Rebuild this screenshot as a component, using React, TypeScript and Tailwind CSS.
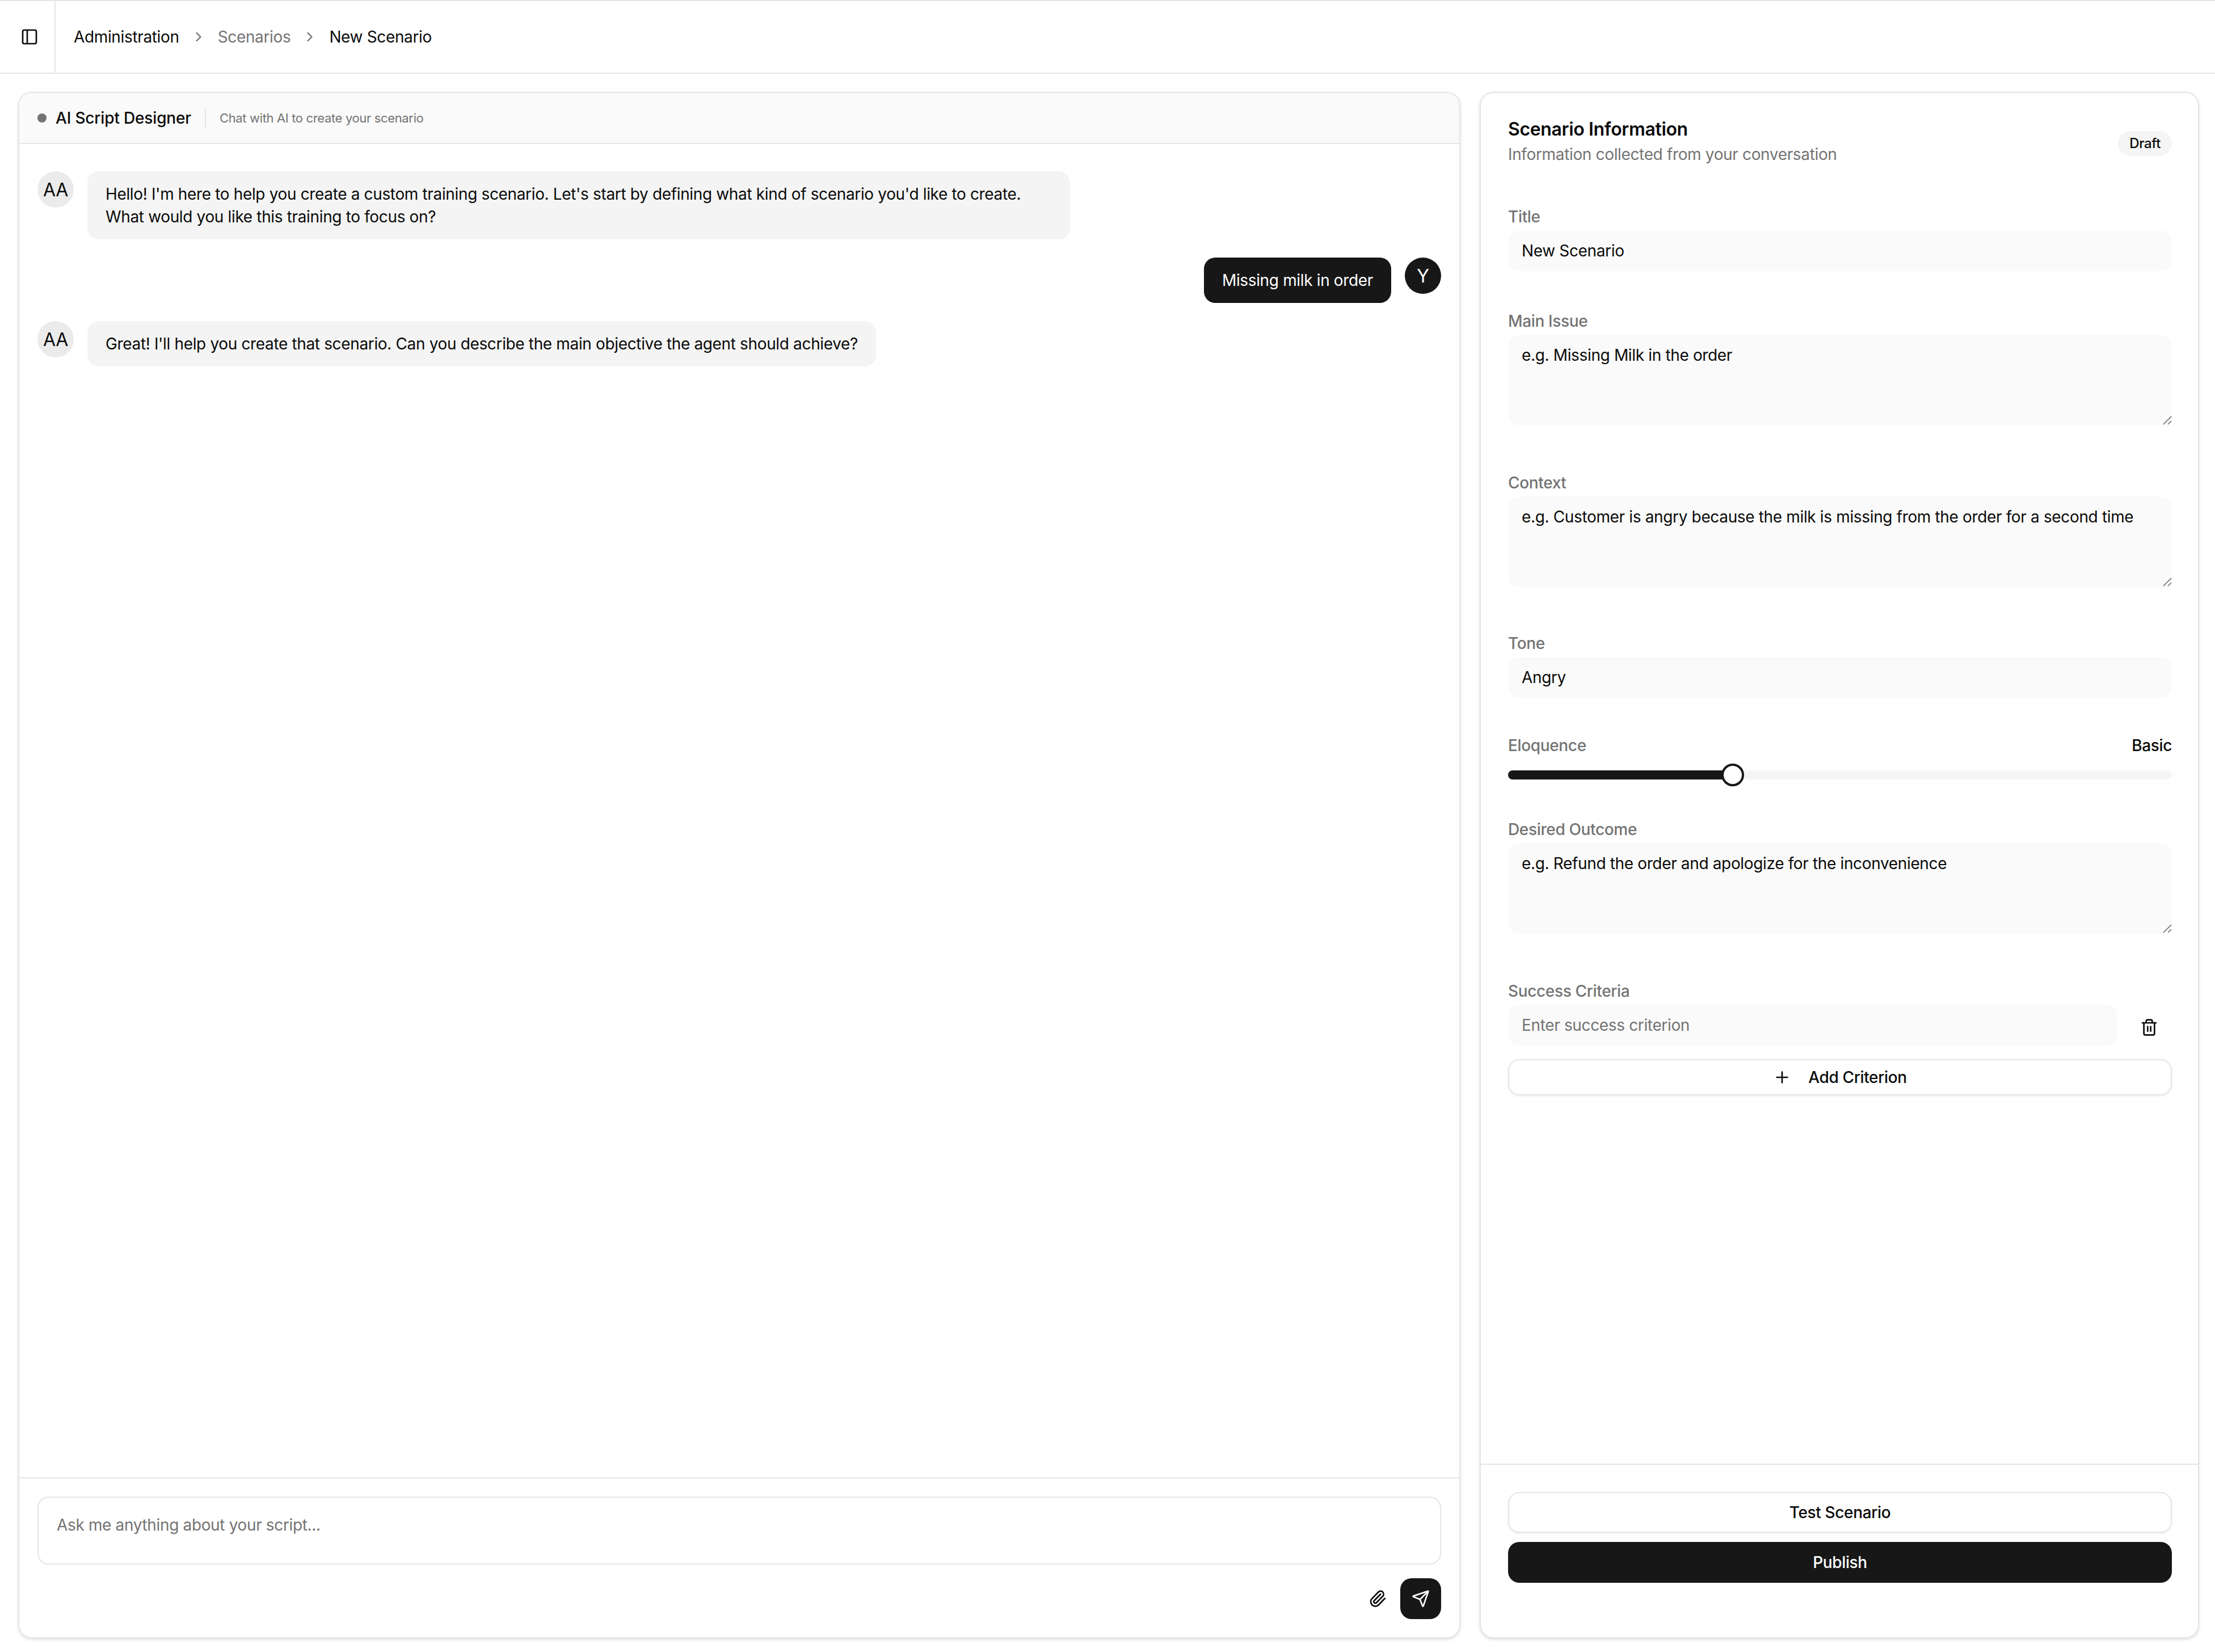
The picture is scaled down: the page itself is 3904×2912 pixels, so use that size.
import { ChevronRight, PanelLeft, Paperclip, Plus, Send, Trash2 } from 'lucide-react'

function Avatar({ label, dark }: { label: string; dark?: boolean }) {
  return (
    <div className={`flex size-8 shrink-0 items-center justify-center rounded-full pt-px text-base ${dark ? 'bg-[#171717] text-white' : 'bg-[#ebebeb] text-[#0a0a0a]'}`}>
      {label}
    </div>
  )
}

function Field({ label, className, children }: { label: string; className?: string; children: React.ReactNode }) {
  return (
    <div className={className}>
      <label className="mb-0.5 block text-sm font-medium text-[#737373]">{label}</label>
      {children}
    </div>
  )
}

function Area({ value }: { value: string }) {
  return (
    <div className="relative">
      <textarea defaultValue={value} className="min-h-20 w-full resize-none rounded-[10px] bg-[#fafafa] px-3 py-2 text-sm text-[#0a0a0a] outline-none" />
      <svg viewBox="0 0 8 8" className="absolute right-0 bottom-[7px] size-2 text-[#6b6b6b]" fill="none" stroke="currentColor" strokeWidth="0.8">
        <path d="M0.5 7.5 L7.5 0.5 M4.5 7.5 L7.5 4.5" />
      </svg>
    </div>
  )
}

const inputClass = 'h-9 w-full rounded-[10px] bg-[#fafafa] px-3 text-sm text-[#0a0a0a] outline-none placeholder:text-[#737373]'

export default function App() {
  return (
    <div className="flex h-[1456px] w-[1952px] flex-col bg-white tracking-[-0.011em] text-[#0a0a0a] [font-family:Inter,sans-serif] [zoom:2]">
      <header className="flex h-[65px] shrink-0 items-stretch border-y border-[#e5e5e5]">
        <div className="flex w-[49px] items-center justify-center border-r border-[#e5e5e5] pl-[4px]">
          <PanelLeft size={16} />
        </div>
        <nav className="flex items-center gap-2.5 pl-4 text-sm">
          <span>Administration</span>
          <ChevronRight size={14} className="text-[#737373]" />
          <span className="text-[#737373]">Scenarios</span>
          <ChevronRight size={14} className="text-[#737373]" />
          <span>New Scenario</span>
        </nav>
      </header>

      <main className="flex min-h-0 flex-1 gap-[17px] pt-4 pr-3.5 pb-3 pl-4">
        <section className="flex min-w-0 flex-1 flex-col overflow-hidden rounded-xl border border-[#e5e5e5] shadow-sm">
          <div className="flex h-[45px] shrink-0 items-center border-b border-[#e5e5e5] bg-[#fafafa] px-4">
            <span className="size-2 rounded-full bg-[#737373]" />
            <span className="ml-2 text-sm font-medium tracking-[-0.006em]">AI Script Designer</span>
            <span className="mx-3 h-4 w-px bg-[#e5e5e5]" />
            <span className="text-[11px] text-[#737373]">Chat with AI to create your scenario</span>
          </div>

          <div className="flex flex-1 flex-col gap-4 px-4 pt-6">
            <div className="flex gap-3">
              <Avatar label="AA" />
              <div className="max-w-[70%] rounded-[10px] bg-[#f4f4f4] px-4 py-2.5 text-sm">
                Hello! I'm here to help you create a custom training scenario. Let's start by defining what kind of scenario you'd like to create. What would you like this training to focus on?
              </div>
            </div>
            <div className="flex justify-end gap-3">
              <div className="rounded-[10px] bg-[#171717] px-4 py-2.5 text-sm text-white">Missing milk in order</div>
              <Avatar label="Y" dark />
            </div>
            <div className="flex gap-3">
              <Avatar label="AA" />
              <div className="max-w-[70%] rounded-[10px] bg-[#f4f4f4] px-4 py-2.5 text-sm">
                Great! I'll help you create that scenario. Can you describe the main objective the agent should achieve?
              </div>
            </div>
          </div>

          <div className="shrink-0 border-t border-[#e5e5e5] p-4">
            <textarea
              placeholder="Ask me anything about your script..."
              className="block h-[60px] w-full resize-none rounded-[10px] border border-[#e5e5e5] px-4 py-3.5 text-sm outline-none placeholder:text-[#737373]"
            />
            <div className="mt-3 flex justify-end gap-0.5">
              <button className="flex size-9 items-center justify-center">
                <Paperclip size={16} />
              </button>
              <button className="flex size-9 items-center justify-center rounded-[10px] bg-[#171717] text-white">
                <Send size={16} />
              </button>
            </div>
          </div>
        </section>

        <aside className="flex w-[634px] shrink-0 flex-col overflow-hidden rounded-xl border border-[#e5e5e5] shadow-sm">
          <div className="flex-1 pt-5 pr-[23px] pl-6">
            <div className="flex items-center justify-between">
              <div>
                <h2 className="text-base font-semibold">Scenario Information</h2>
                <p className="text-sm text-[#737373]">Information collected from your conversation</p>
              </div>
              <span className="mt-[5px] rounded-full bg-[#f5f5f5] px-2.5 py-1 text-xs leading-[14px] font-medium">Draft</span>
            </div>

            <Field label="Title" className="mt-[35px]">
              <input defaultValue="New Scenario" className={inputClass} />
            </Field>
            <Field label="Main Issue" className="mt-[34px]">
              <Area value="e.g. Missing Milk in the order" />
            </Field>
            <Field label="Context" className="mt-[34px]">
              <Area value="e.g. Customer is angry because the milk is missing from the order for a second time" />
            </Field>
            <Field label="Tone" className="mt-[33px]">
              <input defaultValue="Angry" className={inputClass} />
            </Field>

            <div className="mt-8">
              <div className="flex justify-between text-sm font-medium">
                <span className="text-[#737373]">Eloquence</span>
                <span>Basic</span>
              </div>
              <div className="relative mt-3 h-2 rounded-full bg-[#f5f5f5]">
                <div className="h-2 w-[198px] rounded-full bg-[#171717]" />
                <div className="absolute top-[-6px] left-[188px] size-5 rounded-full border-2 border-[#171717] bg-white" />
              </div>
            </div>

            <Field label="Desired Outcome" className="mt-[34px]">
              <Area value="e.g. Refund the order and apologize for the inconvenience" />
            </Field>

            <Field label="Success Criteria" className="mt-[34px]">
              <div className="flex gap-2">
                <input placeholder="Enter success criterion" className={inputClass} />
                <button className="flex size-10 shrink-0 items-center justify-center">
                  <Trash2 size={16} />
                </button>
              </div>
              <button className="mt-2 flex h-8 w-full items-center justify-center gap-[15px] rounded-[10px] border border-[#e5e5e5] text-sm font-medium shadow-xs">
                <Plus size={16} />
                Add Criterion
              </button>
            </Field>
          </div>

          <div className="shrink-0 border-t border-[#e5e5e5] pt-6 pr-[23px] pb-12 pl-6">
            <button className="h-9 w-full rounded-[10px] border border-[#e5e5e5] text-sm font-medium shadow-xs">Test Scenario</button>
            <button className="mt-2 h-9 w-full rounded-[10px] bg-[#171717] text-sm font-medium text-white">Publish</button>
          </div>
        </aside>
      </main>
    </div>
  )
}
